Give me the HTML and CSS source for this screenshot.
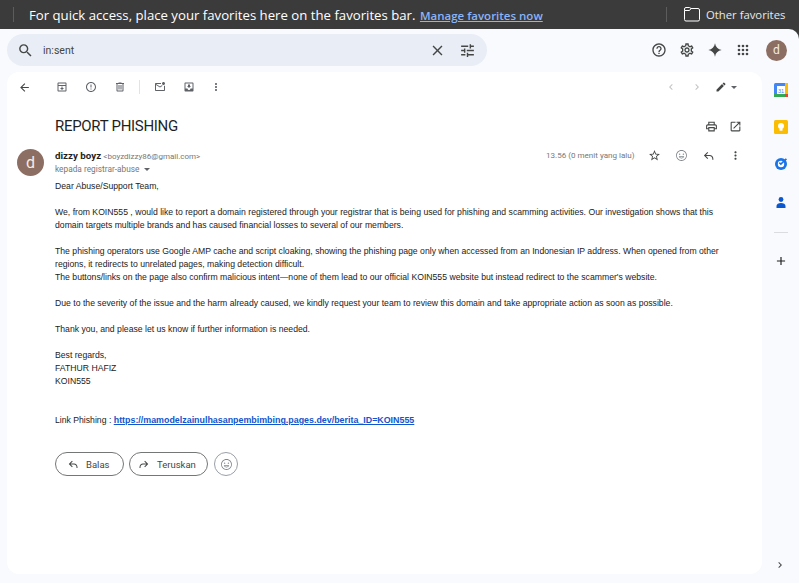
FILE: index.html
```html
<!DOCTYPE html>
<html lang="en">

<head>
    <meta charset="UTF-8">
    <meta name="viewport" content="width=device-width, initial-scale=1.0">
    <title>REPORT PHISHING</title>
    <link rel="stylesheet" href="styles.css">
</head>

<body>

    <svg class="sprite" xmlns="http://www.w3.org/2000/svg">
        <symbol id="i-search" viewBox="0 0 24 24"><path d="M15.5 14h-.79l-.28-.27A6.47 6.47 0 0 0 16 9.5 6.5 6.5 0 1 0 9.5 16c1.61 0 3.09-.59 4.23-1.57l.27.28v.79l5 4.99L20.49 19l-4.99-5zm-6 0C7.01 14 5 11.99 5 9.5S7.01 5 9.5 5 14 7.01 14 9.5 11.99 14 9.5 14z"/></symbol>
        <symbol id="i-close" viewBox="0 0 24 24"><path d="M19 6.41L17.59 5 12 10.59 6.41 5 5 6.41 10.59 12 5 17.59 6.41 19 12 13.41 17.59 19 19 17.59 13.41 12z"/></symbol>
        <symbol id="i-tune" viewBox="0 0 24 24"><path d="M3 17v2h6v-2H3zM3 5v2h10V5H3zm10 16v-2h8v-2h-8v-2h-2v6h2zM7 9v2H3v2h4v2h2V9H7zm14 4v-2H11v2h10zm-6-4h2V7h4V5h-4V3h-2v6z"/></symbol>
        <symbol id="i-help" viewBox="0 0 24 24"><path d="M11 18h2v-2h-2v2zm1-16C6.48 2 2 6.48 2 12s4.48 10 10 10 10-4.48 10-10S17.52 2 12 2zm0 18c-4.41 0-8-3.59-8-8s3.59-8 8-8 8 3.59 8 8-3.59 8-8 8zm0-14c-2.21 0-4 1.79-4 4h2c0-1.1.9-2 2-2s2 .9 2 2c0 2-3 1.75-3 5h2c0-2.25 3-2.5 3-5 0-2.21-1.79-4-4-4z"/></symbol>
        <symbol id="i-gear" viewBox="0 0 24 24"><path d="M19.43 12.98c.04-.32.07-.64.07-.98 0-.34-.03-.66-.07-.98l2.11-1.65c.19-.15.24-.42.12-.64l-2-3.46c-.09-.16-.26-.25-.44-.25-.06 0-.12.01-.17.03l-2.49 1c-.52-.4-1.08-.73-1.69-.98l-.38-2.65C14.46 2.18 14.25 2 14 2h-4c-.25 0-.46.18-.49.42l-.38 2.65c-.61.25-1.17.59-1.69.98l-2.49-1c-.06-.02-.12-.03-.18-.03-.17 0-.34.09-.43.25l-2 3.46c-.13.22-.07.49.12.64l2.11 1.65c-.04.32-.07.65-.07.98 0 .33.03.66.07.98l-2.11 1.65c-.19.15-.24.42-.12.64l2 3.46c.09.16.26.25.44.25.06 0 .12-.01.17-.03l2.49-1c.52.4 1.08.73 1.69.98l.38 2.65c.03.24.24.42.49.42h4c.25 0 .46-.18.49-.42l.38-2.65c.61-.25 1.17-.59 1.69-.98l2.49 1c.06.02.12.03.18.03.17 0 .34-.09.43-.25l2-3.46c.12-.22.07-.49-.12-.64l-2.11-1.65zm-1.98-1.71c.04.31.05.52.05.73 0 .21-.02.43-.05.73l-.14 1.13.89.7 1.08.84-.7 1.21-1.27-.51-1.04-.42-.9.68c-.43.32-.84.56-1.25.73l-1.06.43-.16 1.13-.2 1.35h-1.4l-.19-1.35-.16-1.13-1.06-.43c-.43-.18-.83-.41-1.23-.71l-.91-.7-1.06.43-1.27.51-.7-1.21 1.08-.84.89-.7-.14-1.13c-.03-.31-.05-.54-.05-.74s.02-.43.05-.73l.14-1.13-.89-.7-1.08-.84.7-1.21 1.27.51 1.04.42.9-.68c.43-.32.84-.56 1.25-.73l1.06-.43.16-1.13.2-1.35h1.39l.19 1.35.16 1.13 1.06.43c.43.18.83.41 1.23.71l.91.7 1.06-.43 1.27-.51.7 1.21-1.07.85-.89.7.14 1.13zM12 8c-2.21 0-4 1.79-4 4s1.79 4 4 4 4-1.79 4-4-1.79-4-4-4zm0 6c-1.1 0-2-.9-2-2s.9-2 2-2 2 .9 2 2-.9 2-2 2z"/></symbol>
        <symbol id="i-spark" viewBox="0 0 24 24"><path d="M12 2c.8 5.600 4.400 9.200 10 10-5.600.8-9.200 4.400-10 10-.8-5.600-4.400-9.200-10-10 5.600-.8 9.200-4.400 10-10z"/></symbol>
        <symbol id="i-apps" viewBox="0 0 24 24"><circle cx="6" cy="6" r="2"/><circle cx="12" cy="6" r="2"/><circle cx="18" cy="6" r="2"/><circle cx="6" cy="12" r="2"/><circle cx="12" cy="12" r="2"/><circle cx="18" cy="12" r="2"/><circle cx="6" cy="18" r="2"/><circle cx="12" cy="18" r="2"/><circle cx="18" cy="18" r="2"/></symbol>
        <symbol id="i-back" viewBox="0 0 24 24"><path d="M20 11H7.83l5.59-5.59L12 4l-8 8 8 8 1.41-1.41L7.83 13H20v-2z"/></symbol>
        <symbol id="i-archive" viewBox="0 0 24 24"><path d="M19 3H5c-1.100 0-2 .9-2 2v14c0 1.100.9 2 2 2h14c1.100 0 2-.9 2-2V5c0-1.100-.9-2-2-2zM5 5h14v3H5V5zm0 14V10h14v9H5zm8-8h-2v3H8l4 4 4-4h-3v-3z"/></symbol>
        <symbol id="i-report" viewBox="0 0 24 24"><path d="M11 15h2v2h-2zm0-8h2v6h-2zm1-5C6.470 2 2 6.500 2 12s4.470 10 10 10 10-4.500 10-10S17.530 2 12 2zm0 18c-4.420 0-8-3.580-8-8s3.580-8 8-8 8 3.580 8 8-3.580 8-8 8z"/></symbol>
        <symbol id="i-delete" viewBox="0 0 24 24"><path d="M15 4V3H9v1H4v2h1v13c0 1.100.9 2 2 2h10c1.100 0 2-.9 2-2V6h1V4h-5zm2 15H7V6h10v13zM9 8h2v9H9zm4 0h2v9h-2z"/></symbol>
        <symbol id="i-unread" viewBox="0 0 24 24"><path d="M22 8.980V18c0 1.100-.9 2-2 2H4c-1.100 0-2-.9-2-2V6c0-1.100.9-2 2-2h10.100c-.06.320-.1.660-.1 1s.04.680.1 1H4l8 5 3.670-2.290c.470.430 1.020.760 1.630.980L12 13 4 8v10h16V9.900c.740-.15 1.420-.48 2-.92zM16 5c0 1.660 1.340 3 3 3s3-1.340 3-3-1.340-3-3-3-3 1.340-3 3z"/></symbol>
        <symbol id="i-move" viewBox="0 0 24 24"><path d="M19 3H4.990c-1.110 0-1.980.89-1.980 2L3 19c0 1.100.88 2 1.990 2H19c1.100 0 2-.9 2-2V5c0-1.110-.9-2-2-2zm0 12h-4c0 1.660-1.350 3-3 3s-3-1.340-3-3H4.990V5H19v10zm-3-5h-2V7h-4v3H8l4 4 4-4z"/></symbol>
        <symbol id="i-more" viewBox="0 0 24 24"><path d="M12 8c1.100 0 2-.9 2-2s-.9-2-2-2-2 .9-2 2 .9 2 2 2zm0 2c-1.100 0-2 .9-2 2s.9 2 2 2 2-.9 2-2-.9-2-2-2zm0 6c-1.100 0-2 .9-2 2s.9 2 2 2 2-.9 2-2-.9-2-2-2z"/></symbol>
        <symbol id="i-prev" viewBox="0 0 24 24"><path d="M15.410 7.410L14 6l-6 6 6 6 1.410-1.410L10.830 12z"/></symbol>
        <symbol id="i-next" viewBox="0 0 24 24"><path d="M8.590 16.590L10 18l6-6-6-6-1.410 1.410L13.170 12z"/></symbol>
        <symbol id="i-pen" viewBox="0 0 24 24"><path d="M3 17.250V21h3.750L17.810 9.940l-3.750-3.750L3 17.250zM20.710 7.040c.39-.39.39-1.020 0-1.410l-2.340-2.340c-.39-.39-1.020-.39-1.410 0l-1.830 1.830 3.750 3.750 1.830-1.830z"/></symbol>
        <symbol id="i-print" viewBox="0 0 24 24"><path d="M19 8h-1V3H6v5H5c-1.660 0-3 1.340-3 3v6h4v4h12v-4h4v-6c0-1.660-1.340-3-3-3zM8 5h8v3H8V5zm8 12v2H8v-4h8v2zm2-2v-2H6v2H4v-4c0-.55.45-1 1-1h14c.55 0 1 .45 1 1v4h-2z"/></symbol>
        <symbol id="i-open" viewBox="0 0 24 24"><path d="M19 19H5V5h7V3H5a2 2 0 0 0-2 2v14a2 2 0 0 0 2 2h14c1.100 0 2-.9 2-2v-7h-2v7zM14 3v2h3.590l-9.830 9.830 1.410 1.410L19 6.410V10h2V3h-7z"/></symbol>
        <symbol id="i-star" viewBox="0 0 24 24"><path d="M22 9.240l-7.190-.62L12 2 9.190 8.630 2 9.240l5.460 4.730L5.820 21 12 17.270 18.180 21l-1.630-7.030L22 9.240zM12 15.400l-3.760 2.270 1-4.280-3.320-2.880 4.380-.38L12 6.100l1.710 4.040 4.380.38-3.320 2.880 1 4.280L12 15.400z"/></symbol>
        <symbol id="i-smile" viewBox="0 0 24 24"><path d="M12 2C6.480 2 2 6.480 2 12s4.480 10 10 10 10-4.480 10-10S17.520 2 12 2zm0 18.500c-4.690 0-8.500-3.810-8.500-8.500S7.310 3.500 12 3.500s8.500 3.810 8.500 8.500-3.810 8.500-8.500 8.500z"/><circle cx="8.500" cy="9.500" r="1.300"/><circle cx="15.500" cy="9.500" r="1.300"/><path d="M7 13.500h10c-.5 2.600-2.500 4-5 4s-4.500-1.400-5-4zm1.900 1.300c.6 1 1.700 1.500 3.100 1.500s2.500-.5 3.100-1.500H8.900z"/></symbol>
        <symbol id="i-reply" viewBox="0 0 24 24"><path d="M10 5.500 3.500 12l6.500 6.500 1.400-1.400L7.300 13H14c2.800 0 5 2.200 5 5v2h2v-2c0-3.900-3.100-7-7-7H7.300l4.100-4.100L10 5.500z"/></symbol>
        <symbol id="i-forward" viewBox="0 0 24 24"><path d="M14 5.500 20.500 12 14 18.500l-1.400-1.400 4.100-4.100H10c-2.800 0-5 2.200-5 5v2H3v-2c0-3.900 3.100-7 7-7h6.700l-4.100-4.100L14 5.500z"/></symbol>
        <symbol id="i-plus" viewBox="0 0 24 24"><path d="M19 13h-6v6h-2v-6H5v-2h6V5h2v6h6v2z"/></symbol>
    </svg>

    <div class="favbar">
        <div class="fav-sep"></div>
        <div class="fav-msg">For quick access, place your favorites here on the favorites bar. <a href="#">Manage favorites now</a></div>
        <div class="fav-sep fav-sep-right"></div>
        <svg class="fav-folder" viewBox="0 0 16 15"><path d="M.5 3.500v9a1.500 1.500 0 0 0 1.500 1.500h12a1.500 1.500 0 0 0 1.500-1.500V3a1.500 1.500 0 0 0-1.500-1.500H7L5.500.5H2A1.500 1.500 0 0 0 .5 2zM.5 3.500H5.500L7 1.500"/></svg>
        <div class="fav-other">Other favorites</div>
    </div>

    <div class="app">
        <header class="topbar">
            <div class="search">
                <svg class="icon icon-search"><use href="#i-search"/></svg>
                <span class="search-text">in:sent</span>
                <svg class="icon icon-close"><use href="#i-close"/></svg>
                <svg class="icon icon-tune"><use href="#i-tune"/></svg>
            </div>
            <div class="top-actions">
                <div class="top-btn"><svg class="icon"><use href="#i-help"/></svg></div>
                <div class="top-btn"><svg class="icon"><use href="#i-gear"/></svg></div>
                <div class="top-btn"><svg class="icon"><use href="#i-spark"/></svg></div>
                <div class="top-btn"><svg class="icon"><use href="#i-apps"/></svg></div>
                <div class="top-avatar">d</div>
            </div>
        </header>

        <div class="main">
            <div class="card">
                <div class="toolbar">
                    <div class="tool tool-back"><svg class="icon"><use href="#i-back"/></svg></div>
                    <div class="tool"><svg class="icon"><use href="#i-archive"/></svg></div>
                    <div class="tool"><svg class="icon"><use href="#i-report"/></svg></div>
                    <div class="tool"><svg class="icon"><use href="#i-delete"/></svg></div>
                    <div class="tool-sep"></div>
                    <div class="tool"><svg class="icon"><use href="#i-unread"/></svg></div>
                    <div class="tool"><svg class="icon"><use href="#i-move"/></svg></div>
                    <div class="tool tool-more"><svg class="icon"><use href="#i-more"/></svg></div>
                    <div class="pager">
                        <div class="pager-btn"><svg class="icon"><use href="#i-prev"/></svg></div>
                        <div class="pager-btn"><svg class="icon"><use href="#i-next"/></svg></div>
                        <svg class="icon icon-pen"><use href="#i-pen"/></svg>
                        <div class="caret"></div>
                    </div>
                </div>

                <div class="subject-row">
                    <h1>REPORT PHISHING</h1>
                    <div class="subject-btn"><svg class="icon"><use href="#i-print"/></svg></div>
                    <div class="subject-btn"><svg class="icon"><use href="#i-open"/></svg></div>
                </div>

                <div class="message">
                    <div class="avatar">d</div>
                    <div class="message-main">
                        <div class="message-head">
                            <div class="from">
                                <div><span class="sender">dizzy boyz</span> <span class="email">&lt;boyzdizzy86@gmail.com&gt;</span></div>
                                <div class="to">kepada registrar-abuse <span class="caret caret-small"></span></div>
                            </div>
                            <div class="time">13.56 (0 menit yang lalu)</div>
                            <div class="head-btn"><svg class="icon"><use href="#i-star"/></svg></div>
                            <div class="head-btn head-smile"><svg class="icon"><use href="#i-smile"/></svg></div>
                            <div class="head-btn"><svg class="icon"><use href="#i-reply"/></svg></div>
                            <div class="head-btn"><svg class="icon"><use href="#i-more"/></svg></div>
                        </div>

                        <div class="body-text">
                            Dear Abuse/Support Team,<br>
                            <br>
                            We, from KOIN555 , would like to report a domain registered through your registrar that is being used for phishing and scamming activities. Our investigation shows that this<br>
                            domain targets multiple brands and has caused financial losses to several of our members.<br>
                            <br>
                            The phishing operators use Google AMP cache and script cloaking, showing the phishing page only when accessed from an Indonesian IP address. When opened from other<br>
                            regions, it redirects to unrelated pages, making detection difficult.<br>
                            The buttons/links on the page also confirm malicious intent—none of them lead to our official KOIN555 website but instead redirect to the scammer's website.<br>
                            <br>
                            Due to the severity of the issue and the harm already caused, we kindly request your team to review this domain and take appropriate action as soon as possible.<br>
                            <br>
                            Thank you, and please let us know if further information is needed.<br>
                            <br>
                            Best regards,<br>
                            FATHUR HAFIZ<br>
                            KOIN555<br>
                            <br>
                            <br>
                            Link Phishing : <a class="phish-link" href="#">https://mamodelzainulhasanpembimbing.pages.dev/berita_ID=KOIN555</a>
                        </div>

                        <div class="reply-row">
                            <button class="pill pill-reply"><svg class="icon"><use href="#i-reply"/></svg>Balas</button>
                            <button class="pill pill-forward"><svg class="icon"><use href="#i-forward"/></svg>Teruskan</button>
                            <button class="pill-emoji"><svg class="icon"><use href="#i-smile"/></svg></button>
                        </div>
                    </div>
                </div>
            </div>

            <aside class="side">
                <svg class="side-icon" viewBox="0 0 14 14">
                    <rect width="14" height="14" rx="1.500" fill="#4285f4"/>
                    <rect x="11" width="3" height="11" fill="#fbbc04"/>
                    <rect y="11" width="11" height="3" fill="#34a853"/>
                    <rect x="11" y="11" width="3" height="3" fill="#ea4335"/>
                    <rect x="3" y="3" width="8" height="8" fill="#fff"/>
                    <text x="7" y="9.500" text-anchor="middle" class="cal-num">31</text>
                </svg>
                <svg class="side-icon" viewBox="0 0 14 14">
                    <rect width="14" height="14" rx="1.500" fill="#fbbc04"/>
                    <circle cx="7" cy="6" r="3" fill="#fff"/>
                    <rect x="5.500" y="8.500" width="3" height="2.200" fill="#fff"/>
                </svg>
                <svg class="side-icon" viewBox="0 0 14 14">
                    <circle cx="7" cy="7" r="6" fill="#1a73e8"/>
                    <circle cx="7" cy="7" r="3.200" fill="#fff"/>
                    <path d="M4.800 6.200l2 2L13 2.500l-1.200-1.200-5 4.600-1-.9z" fill="#1a73e8"/>
                </svg>
                <svg class="side-icon" viewBox="0 0 14 14">
                    <circle cx="7" cy="5.500" r="2.400" fill="#0b57d0"/>
                    <path d="M2.500 14v-2c0-2 2-3 4.500-3s4.500 1 4.500 3v2z" fill="#0b57d0"/>
                </svg>
                <div class="side-sep"></div>
                <svg class="icon side-plus"><use href="#i-plus"/></svg>
                <svg class="icon side-expand"><use href="#i-next"/></svg>
            </aside>
        </div>
    </div>

</body>

</html>
```

FILE: styles.css
```css
* {
    box-sizing: border-box;
    margin: 0;
    padding: 0;
}

body {
    font-family: "Liberation Sans", Arial, sans-serif;
    background-color: #3b3b3b;
    width: 799px;
    height: 583px;
    overflow: hidden;
}

.sprite {
    display: none;
}

.icon {
    display: block;
    width: 14px;
    height: 14px;
    fill: #444746;
}

/* favorites bar */
.favbar {
    display: flex;
    align-items: center;
    height: 29px;
    color: #fff;
    font-family: "Open Sans", sans-serif;
    font-size: 13.200px;
}

.fav-sep {
    width: 1px;
    height: 15px;
    margin-left: 13px;
    background-color: #5c5c5c;
}

.fav-msg {
    margin-left: 15px;
    width: 637px;
    white-space: nowrap;
}

.fav-msg a {
    margin-left: 1px;
    color: #8ab4f8;
    font-size: 11.500px;
    font-weight: 600;
}

.fav-sep-right {
    margin-left: 0;
}

.fav-folder {
    width: 16px;
    height: 15px;
    margin-left: 17px;
    fill: none;
    stroke: #fff;
}

.fav-other {
    margin-left: 6px;
    font-size: 11.300px;
    color: #e8e8e8;
}

/* gmail shell */
.app {
    height: 554px;
    background-color: #f8fafd;
    border-top-right-radius: 10px;
}

.topbar {
    display: flex;
    align-items: center;
    height: 43px;
    padding: 5px 12px 6px 7px;
}

.search {
    display: flex;
    align-items: center;
    width: 480px;
    height: 32px;
    padding-left: 10px;
    background-color: #e9eef6;
    border-radius: 16px;
}

.icon-search {
    width: 17px;
    height: 17px;
}

.search-text {
    margin-left: 9px;
    font-family: Roboto, sans-serif;
    font-size: 10.500px;
    color: #444746;
}

.icon-close {
    width: 17px;
    height: 17px;
    margin-left: auto;
}

.icon-tune {
    width: 17px;
    height: 17px;
    margin-left: 13px;
    margin-right: 11px;
}

.top-actions {
    display: flex;
    align-items: center;
    margin-left: auto;
}

.top-btn {
    display: flex;
    justify-content: center;
    align-items: center;
    width: 28px;
    height: 28px;
}

.top-btn .icon {
    width: 16px;
    height: 16px;
}

.top-avatar {
    width: 21px;
    height: 21px;
    margin-left: 9px;
    border-radius: 50%;
    background-color: #8d6e63;
    color: #f3ece9;
    font-family: Roboto, sans-serif;
    font-size: 12px;
    line-height: 21px;
    text-align: center;
}

.main {
    display: flex;
    height: 511px;
}

/* message card */
.card {
    width: 755px;
    height: 502px;
    margin-left: 7px;
    background-color: #fff;
    border-radius: 12px;
}

.toolbar {
    display: flex;
    align-items: center;
    height: 30px;
    padding-left: 3px;
}

.tool {
    display: flex;
    justify-content: center;
    align-items: center;
    width: 29px;
    height: 28px;
}

.tool .icon {
    width: 12px;
    height: 12px;
    fill: #5f6368;
}

.tool-back {
    width: 28px;
    margin-right: 9px;
}

.tool-back .icon {
    width: 13px;
    height: 13px;
    fill: #444746;
}

.tool-more {
    margin-left: -2px;
}

.tool-sep {
    width: 1px;
    height: 14px;
    margin: 0 5px;
    background-color: #e3e3e3;
}

.pager {
    display: flex;
    align-items: center;
    margin-left: auto;
    padding-right: 25px;
}

.pager-btn {
    display: flex;
    justify-content: center;
    width: 26px;
}

.pager-btn .icon {
    width: 12px;
    height: 12px;
    fill: #c0c2c4;
}

.icon-pen {
    margin-left: 5px;
    width: 12px;
    height: 12px;
}

.caret {
    width: 0;
    height: 0;
    margin-left: 4px;
    border-left: 3px solid transparent;
    border-right: 3px solid transparent;
    border-top: 3px solid #5f6368;
}

.caret-small {
    display: inline-block;
    margin-left: 2px;
    vertical-align: middle;
}

.subject-row {
    display: flex;
    align-items: center;
    height: 24px;
    margin-top: 12px;
    padding-right: 15px;
}

h1 {
    margin-left: 48px;
    margin-right: auto;
    font-family: Roboto, sans-serif;
    font-size: 15px;
    font-weight: 400;
    letter-spacing: -0.300px;
    color: #1f1f1f;
}

.subject-btn {
    display: flex;
    justify-content: center;
    align-items: center;
    width: 24px;
    height: 24px;
}

.subject-btn .icon {
    width: 13px;
    height: 13px;
}

.message {
    display: flex;
    gap: 11px;
    margin-top: 11px;
    padding-left: 10px;
    padding-right: 13px;
}

.avatar {
    flex: none;
    width: 27px;
    height: 27px;
    border-radius: 50%;
    background-color: #8d6e63;
    color: #f3ece9;
    font-family: Roboto, sans-serif;
    font-size: 16px;
    line-height: 27px;
    text-align: center;
}

.message-main {
    flex: 1;
}

.message-head {
    display: flex;
    align-items: flex-start;
    height: 31px;
}

.from {
    flex: 1;
    font-family: Roboto, sans-serif;
    font-size: 9px;
    line-height: 13px;
    color: #5e5e5e;
}

.sender {
    font-size: 9.750px;
    font-weight: 700;
    color: #1f1f1f;
}

.email {
    font-size: 8px;
    color: #777;
}

.to {
    font-size: 8.300px;
    color: #777;
}

.time {
    margin-right: 6.500px;
    font-family: Roboto, sans-serif;
    font-size: 8.050px;
    line-height: 13px;
    color: #777;
}

.head-btn {
    display: flex;
    justify-content: center;
    width: 27px;
}

.head-btn .icon {
    width: 13px;
    height: 13px;
}

.head-smile .icon {
    fill: #80868b;
}

.body-text {
    font-size: 8.670px;
    line-height: 13px;
    color: #222;
}

.phish-link {
    color: #1155cc;
    font-size: 8.880px;
    font-weight: 700;
}

.reply-row {
    display: flex;
    margin-top: 25px;
}

.pill {
    display: flex;
    align-items: center;
    height: 24px;
    border: 1px solid #747775;
    border-radius: 12px;
    background-color: #fff;
    color: #444746;
    font-family: Roboto, sans-serif;
    font-size: 9.500px;
}

.pill .icon {
    width: 12px;
    height: 12px;
    margin-right: 7px;
}

.pill-reply {
    width: 69px;
    padding-left: 11px;
}

.pill-forward {
    width: 79px;
    margin-left: 5px;
    padding-left: 8px;
}

.pill-emoji {
    display: flex;
    justify-content: center;
    align-items: center;
    width: 24px;
    height: 24px;
    margin-left: 6px;
    border: 1px solid #9aa0a6;
    border-radius: 50%;
    background-color: #fff;
}

.pill-emoji .icon {
    width: 13px;
    height: 13px;
    fill: #80868b;
}

/* right side panel */
.side {
    position: relative;
    display: flex;
    flex-direction: column;
    align-items: center;
    width: 37px;
    padding-top: 11px;
}

.side-icon {
    flex: none;
    width: 14px;
    height: 14px;
    margin-bottom: 23px;
}

.cal-num {
    font-family: "Liberation Sans", sans-serif;
    font-size: 5.500px;
    fill: #4285f4;
}

.side-sep {
    width: 14px;
    height: 1px;
    margin-top: 1px;
    background-color: #dadce0;
}

.side-plus {
    margin-top: 21px;
    fill: #1f1f1f;
}

.side-expand {
    position: absolute;
    left: 12px;
    top: 487px;
    width: 12px;
    height: 12px;
}
```
